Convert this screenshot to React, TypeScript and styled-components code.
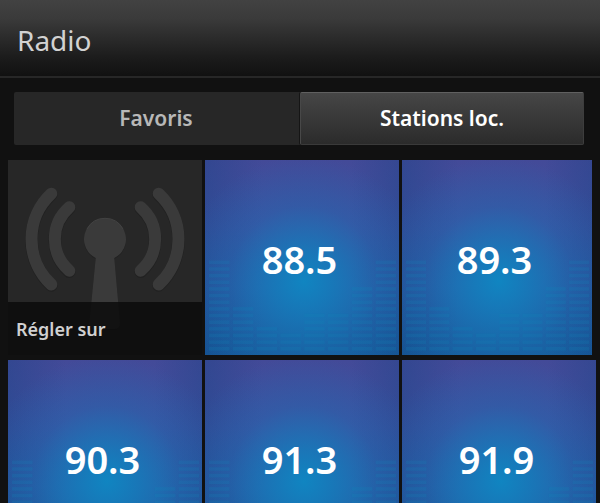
import React, { useState } from "react";
import styled, { createGlobalStyle, css } from "styled-components";

const GlobalStyle = createGlobalStyle`
  *, *::before, *::after { box-sizing: border-box; }
  body {
    margin: 0;
    background: #111;
    font-family: "Noto Sans", "Open Sans", sans-serif;
  }
`;

const Screen = styled.main`
  display: flex;
  flex-direction: column;
  height: 100vh;
  overflow: hidden;
  background: #111;
`;

const Header = styled.header`
  flex: none;
  display: flex;
  align-items: center;
  height: 78px;
  padding: 4px 17px 0;
  border-bottom: 2px solid #272727;
  background: linear-gradient(#424242, #3a3a3a 25%, #1c1c1c 75%, #111);
`;

const Title = styled.h1`
  margin: 0;
  font-size: 28px;
  line-height: 40px;
  font-weight: 400;
  color: #d2d2d2;
`;

const Tabs = styled.div`
  flex: none;
  display: grid;
  grid-template-columns: 1fr 1fr;
  gap: 2px;
  margin: 14px 16px 15px 14px;
  border-radius: 2px;
  background: #272727;
`;

const Tab = styled.button<{ $active: boolean }>`
  height: 53px;
  padding: 0 0 2px;
  border: 1px solid transparent;
  border-radius: 2px;
  background: transparent;
  color: #b8b8b8;
  font-family: inherit;
  font-size: 21px;
  line-height: 28px;
  font-weight: 600;
  cursor: pointer;

  ${({ $active }) =>
    $active &&
    css`
      border-color: #606060 #3d3d3d #3a3a3a #484848;
      background: linear-gradient(#464646, #2b2b2b);
      box-shadow: -1px 0 0 #151515;
      color: #fff;
    `}
`;

const TileGrid = styled.div`
  display: grid;
  grid-template-columns: repeat(3, 1fr);
  grid-auto-rows: 195px;
  gap: 5px 3px;
  padding: 0 4px 0 8px;
`;

const tileBase = css`
  display: grid;
  min-width: 0;
  padding: 0;
  border: 0;
  overflow: hidden;
  font-family: inherit;
  cursor: pointer;

  & > * {
    grid-area: 1 / 1;
  }
`;

const StationTile = styled.button<{ $trimmed: boolean }>`
  ${tileBase}
  margin-right: ${({ $trimmed }) => ($trimmed ? "4px" : "0")};
  background:
    radial-gradient(circle at 51% 62%, #1085c1 0%, rgba(18, 128, 190, 0.75) 20%, rgba(28, 113, 182, 0.33) 48%, rgba(40, 90, 170, 0) 80%),
    linear-gradient(90deg, rgba(20, 65, 130, 0.35), rgba(20, 65, 130, 0) 30%, rgba(20, 65, 130, 0) 75%, rgba(20, 65, 130, 0.3)),
    linear-gradient(#434a98, #3d51a0 35%, #2d5aa4 65%, #165b9a);
`;

const Frequency = styled.span`
  place-self: center;
  padding: 3px 5px 0 0;
  color: #fff;
  font-size: 38px;
  line-height: 48px;
  font-weight: 600;
`;

const TuneTile = styled.button`
  ${tileBase}
  background: #272727;
`;

const TuneLabel = styled.span`
  align-self: end;
  height: 53px;
  padding: 14px 8px 0;
  background: rgba(12, 12, 12, 0.86);
  color: #d0d0d0;
  font-size: 18px;
  line-height: 26px;
  font-weight: 600;
  text-align: left;
`;

const Artwork = styled.svg`
  display: block;
  width: 100%;
  height: 195px;
`;

const barCounts = [14, 7, 4, 3, 6, 6, 10, 14];

function Equalizer() {
  return (
    <Artwork viewBox="0 0 194 195" preserveAspectRatio="none" aria-hidden="true">
      {barCounts.map((count, column) =>
        Array.from({ length: count }, (_, row) => (
          <rect
            key={`${column}-${row}`}
            x={4 + column * 23.8}
            y={187 - row * 6.65}
            width="20.5"
            height="3.6"
            fill="#1187b8"
            opacity="0.2"
          />
        ))
      )}
    </Artwork>
  );
}

function Antenna() {
  const arcs = [
    "M61.3 47.3A42 42 0 0 0 61.3 110.7",
    "M43.3 33.7A62 62 0 0 0 43.3 124.5",
    "M132.7 47.3A42 42 0 0 1 132.7 110.7",
    "M150.7 33.7A62 62 0 0 1 150.7 124.5",
  ];
  const mast =
    "M87.7 98A21 21 0 1 1 106.3 98L112 163Q112 169 106 169H87Q81.300 169 81.300 163Z";
  return (
    <Artwork viewBox="0 0 194 195" aria-hidden="true">
      <g transform="translate(0 1)" stroke="#212121" fill="none" strokeWidth="12.500" strokeLinecap="round">
        {arcs.map((d) => (
          <path key={d} d={d} />
        ))}
        <path d={mast} fill="#212121" stroke="none" />
      </g>
      <g stroke="#3a3a3a" fill="none" strokeWidth="12" strokeLinecap="round">
        {arcs.map((d) => (
          <path key={d} d={d} />
        ))}
      </g>
      <path d={mast} fill="#3a3a3a" />
      <path d="M79 69A20.500 20.500 0 0 1 115 69" fill="none" stroke="#424242" />
    </Artwork>
  );
}

const tabs = ["Favoris", "Stations loc."];
const stations = ["88.5", "89.3", "90.3", "91.3", "91.9"];

export default function App() {
  const [active, setActive] = useState(1);
  return (
    <>
      <GlobalStyle />
      <Screen>
        <Header>
          <Title>Radio</Title>
        </Header>
        <Tabs role="tablist">
          {tabs.map((label, index) => (
            <Tab
              key={label}
              type="button"
              role="tab"
              aria-selected={active === index}
              $active={active === index}
              onClick={() => setActive(index)}
            >
              {label}
            </Tab>
          ))}
        </Tabs>
        <TileGrid>
          <TuneTile type="button">
            <Antenna />
            <TuneLabel>Régler sur</TuneLabel>
          </TuneTile>
          {stations.map((station, index) => (
            <StationTile key={station} type="button" $trimmed={index === 1}>
              <Equalizer />
              <Frequency>{station}</Frequency>
            </StationTile>
          ))}
        </TileGrid>
      </Screen>
    </>
  );
}
